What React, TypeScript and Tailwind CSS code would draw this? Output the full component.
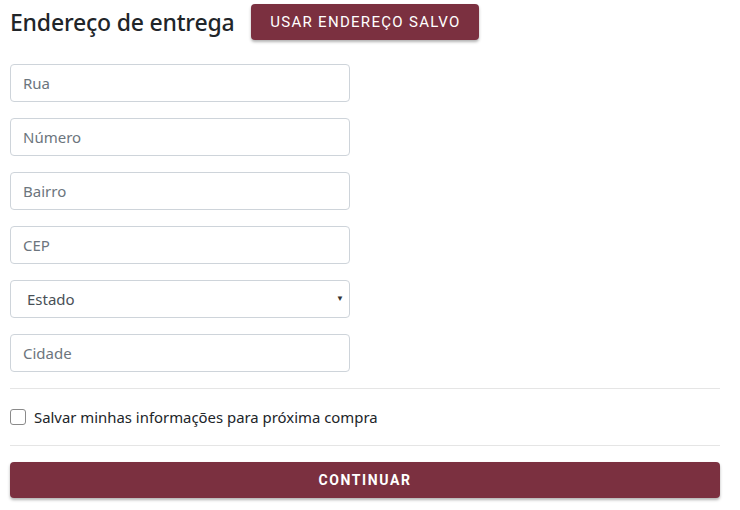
import { useState } from 'react'

const FIELDS = ['Rua', 'Número', 'Bairro', 'CEP']

export default function App() {
  const [save, setSave] = useState(false)

  return (
    <div className="bg-white w-[740px] h-[510px] px-[10px] pt-[4px] text-[#212529]" style={{ fontFamily: '"Noto Sans", "Open Sans", sans-serif' }}>
      <div className="w-[710px]">
        {/* Header */}
        <div className="flex items-center h-[36px]">
          <h1 className="text-[23px] font-medium leading-none tracking-[-0.2px] text-[#212529]">Endereço de entrega</h1>
          <button className="ml-[17px] h-[36px] w-[228px] rounded-[4px] bg-[#7b3040] text-white text-[15px] font-normal uppercase tracking-[1.3px] shadow-[0_2px_3px_rgba(0,0,0,0.3)]" style={{ fontFamily: 'Roboto, sans-serif' }}>
            Usar endereço salvo
          </button>
        </div>

        {/* Fields */}
        <div className="flex flex-col gap-[16px] mt-[24px] w-[340px]">
          {FIELDS.map(f => (
            <input
              key={f}
              placeholder={f}
              className="h-[38px] w-full rounded-[4px] border border-[#ced4da] px-[12px] text-[15px] text-[#495057] placeholder:text-[#6c757d] outline-none"
            />
          ))}
          <div className="relative h-[38px] w-full rounded-[4px] border border-[#ced4da] flex items-center pl-[16px] text-[15px] text-[#495057]">
            Estado
            <span className="absolute right-[5px] top-[11px] text-[8px] text-[#333]">▼</span>
          </div>
          <input
            placeholder="Cidade"
            className="h-[38px] w-full rounded-[4px] border border-[#ced4da] px-[12px] text-[15px] text-[#495057] placeholder:text-[#6c757d] outline-none"
          />
        </div>

        <hr className="mt-[16px] border-t border-[#e5e5e5]" />

        <label className="flex items-center h-[56px] gap-[8px] text-[14.9px] text-[#212529]">
          <span
            onClick={() => setSave(!save)}
            className="w-[16px] h-[16px] rounded-[3px] border border-[#8a8a8a] bg-white"
          />
          Salvar minhas informações para próxima compra
        </label>

        <hr className="border-t border-[#e5e5e5]" />

        <button className="mt-[16px] h-[36px] w-full rounded-[4px] bg-[#7b3040] text-white text-[14px] font-bold uppercase tracking-[1.6px] shadow-[0_2px_3px_rgba(0,0,0,0.3)]" style={{ fontFamily: 'Roboto, sans-serif' }}>
          Continuar
        </button>
      </div>
    </div>
  )
}
